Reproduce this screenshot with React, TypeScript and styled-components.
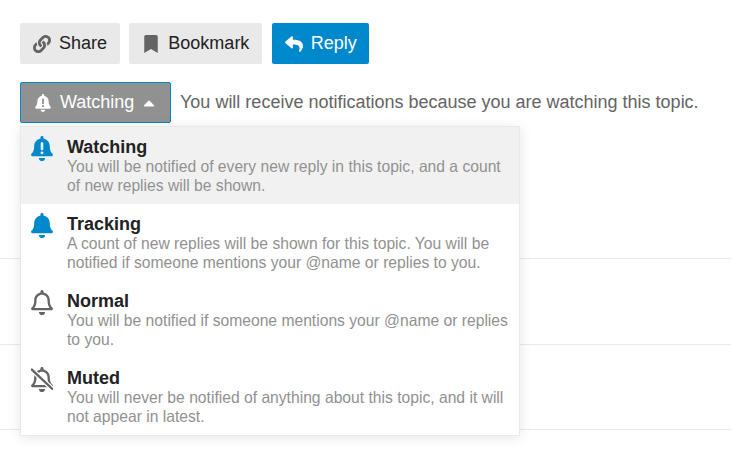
import React from 'react';
import {FC} from 'react';
import styled, {createGlobalStyle} from "styled-components";
import {FaLink, FaBookmark, FaReply, FaCaretUp, FaRegBell} from "react-icons/fa";

const GlobalStyle = createGlobalStyle`
html, body {
margin: 0;
padding: 0;
background: #fff;
}
body {
font-family: "Liberation Sans", Arial, sans-serif;
overflow: hidden;
}
`
const Page = styled.div`
position: relative;
width: 731px;
height: 449px;
overflow: hidden;
padding: 23px 0 0 20px;
box-sizing: border-box;
`
const Toolbar = styled.div`
display: flex;
gap: 9.3px;
`
const Button = styled.button<{primary?: boolean}>`
display: flex;
align-items: center;
gap: 8px;
height: 41px;
padding: ${({primary}) => primary ? "0 12px 0 13px" : "0 13px"};
border: none;
border-radius: 2px;
font-family: inherit;
font-size: 18px;
color: ${({primary}) => primary ? "#fff" : "#222"};
background-color: ${({primary}) => primary ? "#0088cc" : "#e9e9e9"};
svg {
flex-shrink: 0;
font-size: 18px;
color: ${({primary}) => primary ? "#fff" : "#646464"};
}
`
const NotificationRow = styled.div`
display: flex;
align-items: center;
gap: 9px;
margin-top: 18px;
`
const NotificationWrap = styled.div`
position: relative;
`
const WatchingButton = styled.button`
display: flex;
align-items: center;
height: 41px;
width: 151px;
box-sizing: border-box;
padding: 0 0 0 13px;
gap: 8px;
border: 1px solid #0088cc;
border-radius: 2px;
background-color: #919191;
color: #fff;
font-family: inherit;
font-size: 18px;
svg {
flex-shrink: 0;
}
`
const Caret = styled(FaCaretUp)`
margin-left: -2px;
`
const Reason = styled.span`
font-size: 18px;
color: #646464;
`
const Menu = styled.div`
position: absolute;
top: 44px;
left: 0;
width: 500px;
box-sizing: border-box;
background: #fff;
border: 1px solid #e9e9e9;
box-shadow: 0 2px 12px rgba(0, 0, 0, 0.1);
z-index: 2;
`
const MenuItem = styled.div<{active?: boolean}>`
display: flex;
height: 77px;
box-sizing: border-box;
padding: 9px 9px 0 10px;
background-color: ${({active}) => active ? "#f1f1f1" : "transparent"};
`
const IconCell = styled.div<{tone: string}>`
flex: 0 0 22px;
margin-right: 14px;
color: ${({tone}) => tone};
font-size: 23px;
line-height: 1;
svg {
display: block;
width: 22px;
height: 25px;
}
`
const ItemText = styled.div`
flex: 1;
min-width: 0;
padding-top: 1px;
`
const ItemTitle = styled.div`
font-size: 18px;
font-weight: 700;
line-height: 21px;
margin-bottom: -1px;
color: #222;
`
const ItemDesc = styled.div`
font-size: 15.66px;
line-height: 19px;
color: #919191;
`
const TopicLines = styled.div`
position: absolute;
inset: 0;
`
const TopicLine = styled.div<{gap: number}>`
margin-top: ${({gap}) => gap}px;
height: 1px;
background: #e9e9e9;
`
const Foreground = styled.div`
position: relative;
`

const BELL = "M224 512c35.32 0 63.97-28.65 63.97-64H160.03c0 35.35 28.65 64 63.97 64zm215.39-149.71c-19.32-20.76-55.47-51.99-55.47-154.29 0-77.7-54.48-139.9-127.94-155.16V32c0-17.67-14.32-32-31.98-32s-31.98 14.33-31.98 32v20.84C118.56 68.1 64.08 130.3 64.08 208c0 102.3-36.15 133.53-55.47 154.29-6 6.45-8.66 14.16-8.61 21.71.11 16.4 12.98 32 32.1 32h383.8c19.12 0 32-15.6 32.1-32 .05-7.55-2.61-15.27-8.61-21.71z";
const BELL_OUTLINE = "M439.39 362.29c-19.32-20.76-55.47-51.99-55.47-154.29 0-77.7-54.48-139.9-127.94-155.16V32c0-17.67-14.32-32-31.98-32s-31.98 14.33-31.98 32v20.84C118.56 68.1 64.08 130.3 64.08 208c0 102.3-36.15 133.53-55.47 154.29-6 6.45-8.66 14.16-8.61 21.71.11 16.4 12.98 32 32.1 32h383.8c19.12 0 32-15.6 32.1-32 .05-7.55-2.61-15.27-8.61-21.71zM67.53 368c21.22-27.97 44.42-74.33 44.53-159.42 0-.2-.06-.38-.06-.58 0-61.86 50.14-112 112-112s112 50.14 112 112c0 .2-.06.38-.06.58.11 85.1 23.31 131.46 44.53 159.42H67.53zM224 512c35.32 0 63.97-28.65 63.97-64H160.03c0 35.35 28.65 64 63.97 64z";

const Bell: FC<{mark?: string, size?: number}> = ({mark, size}) => (
    <svg viewBox="0 0 448 512" fill="currentColor" width={size} height={size}>
        <path d={BELL}/>
        {mark && <>
            <rect x="198" y="130" width="52" height="160" rx="18" fill={mark}/>
            <circle cx="224" cy="345" r="30" fill={mark}/>
        </>}
    </svg>
);

const MutedBell: FC = () => (
    <svg viewBox="0 0 448 512" fill="currentColor">
        <path d={BELL_OUTLINE}/>
        <line x1="0" y1="40" x2="448" y2="460" stroke="#fff" strokeWidth="100"/>
        <line x1="0" y1="40" x2="448" y2="460" stroke="currentColor" strokeWidth="48"/>
    </svg>
);

interface IItem {
    title: string
    desc: string
    tone: string
    icon: React.ReactNode
    active?: boolean
}

const items: IItem[] = [
    {
        title: "Watching",
        desc: "You will be notified of every new reply in this topic, and a count of new replies will be shown.",
        tone: "#0088cc",
        icon: <Bell mark="#f1f1f1"/>,
        active: true
    },
    {
        title: "Tracking",
        desc: "A count of new replies will be shown for this topic. You will be notified if someone mentions your @name or replies to you.",
        tone: "#0088cc",
        icon: <Bell/>
    },
    {
        title: "Normal",
        desc: "You will be notified if someone mentions your @name or replies to you.",
        tone: "#646464",
        icon: <FaRegBell/>
    },
    {
        title: "Muted",
        desc: "You will never be notified of anything about this topic, and it will not appear in latest.",
        tone: "#646464",
        icon: <MutedBell/>
    }
];

const App: FC = () => {
    return (
        <Page>
            <GlobalStyle/>
            <TopicLines>
                <TopicLine gap={258}/>
                <TopicLine gap={85}/>
                <TopicLine gap={84}/>
            </TopicLines>
            <Foreground>
                <Toolbar>
                    <Button><FaLink/>Share</Button>
                    <Button><FaBookmark/>Bookmark</Button>
                    <Button primary><FaReply/>Reply</Button>
                </Toolbar>
                <NotificationRow>
                    <NotificationWrap>
                        <WatchingButton>
                            <Bell mark="#919191" size={18}/>
                            Watching
                            <Caret size={18}/>
                        </WatchingButton>
                        <Menu>
                            {items.map(item => (
                                <MenuItem key={item.title} active={item.active}>
                                    <IconCell tone={item.tone}>{item.icon}</IconCell>
                                    <ItemText>
                                        <ItemTitle>{item.title}</ItemTitle>
                                        <ItemDesc>{item.desc}</ItemDesc>
                                    </ItemText>
                                </MenuItem>
                            ))}
                        </Menu>
                    </NotificationWrap>
                    <Reason>You will receive notifications because you are watching this topic.</Reason>
                </NotificationRow>
            </Foreground>
        </Page>
    );
};

export default App;
